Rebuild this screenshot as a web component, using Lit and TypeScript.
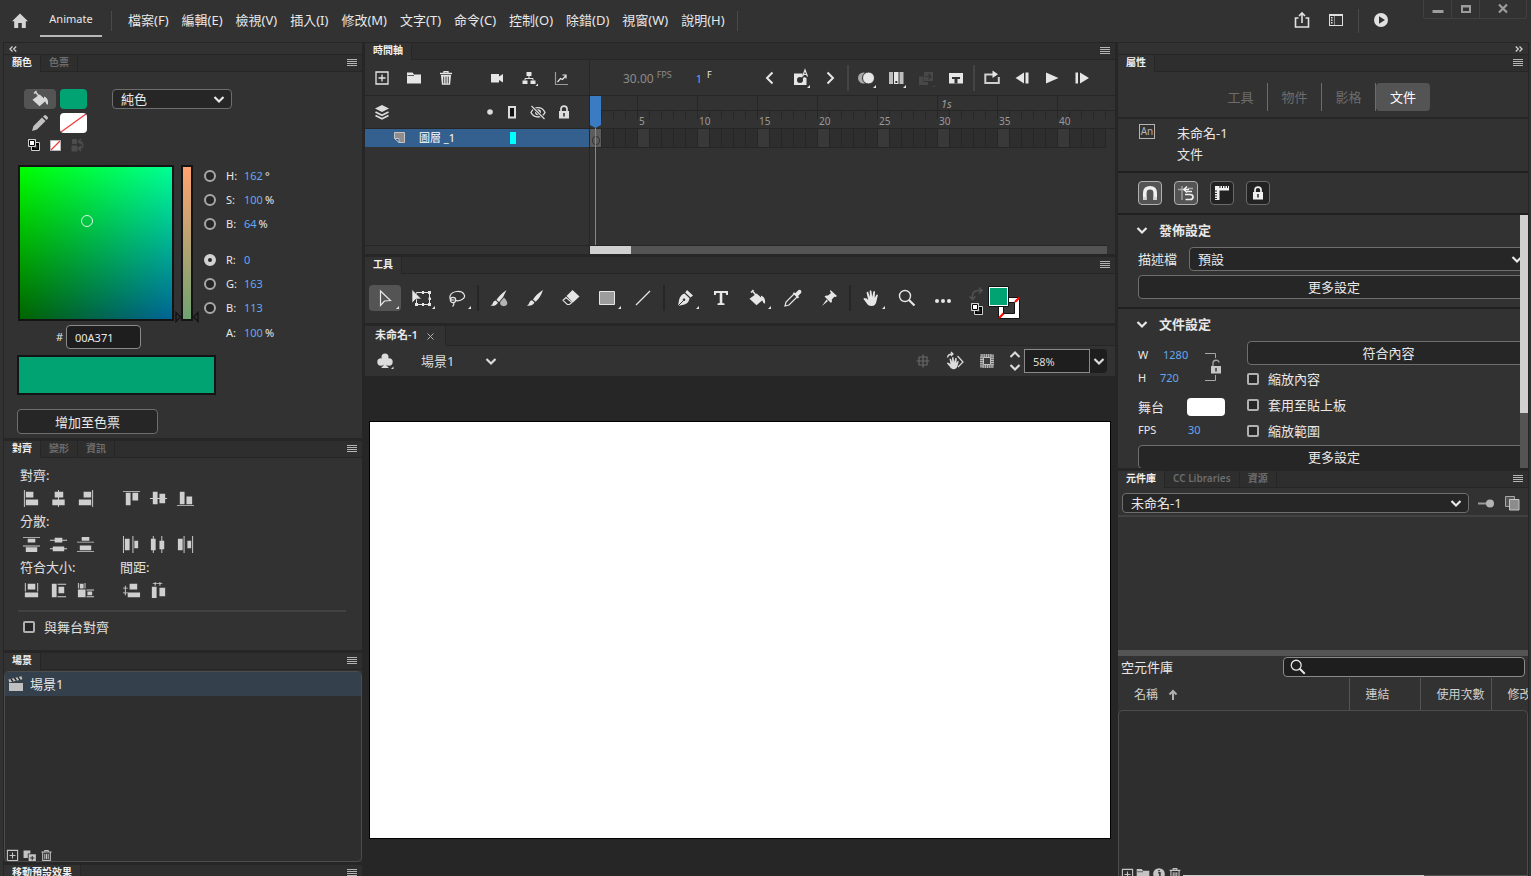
import { LitElement, html, svg, css, nothing, SVGTemplateResult } from "lit";
import { customElement, state } from "lit/decorators.js";
import { classMap } from "lit/directives/class-map.js";

const corner = svg`<path d="M20 17v3h-3z" fill="#e6e6e6"/>`;

const GLYPHS: Record<string, SVGTemplateResult> = {
  home: svg`<path d="M10 2.500 2 10.200h2.200V17h4v-5h3.600v5h4v-6.800H18z"/>`,
  share: svg`<path d="M6.500 8H3.500v9h13V8h-3M10 13V3.500M7 6l3-3 3 3" fill="none" stroke="currentColor" stroke-width="1.600"/>`,
  workspace: svg`<rect x="3.500" y="4.500" width="13" height="11" fill="none" stroke="currentColor"/><path d="M3 4h14v2H3z"/><path d="M5 7h1.500v1.500H5zM5 9.500h1.500V11H5zM5 12h1.500v1.500H5z"/><path d="M8.500 5v10" stroke="currentColor" stroke-width=".5"/>`,
  playCircle: svg`<circle cx="10" cy="10" r="7"/><path d="M8 6.200v7.600l6-3.800z" fill="#323232"/>`,
  minimize: svg`<path d="M4.500 11h11v3h-11z"/>`,
  maximize: svg`<path d="M5 6h10v8H5zM7 8.500v3.500h6V8.500z" fill-rule="evenodd"/>`,
  close: svg`<path d="m6 5.500 8 8m0-8-8 8" stroke="currentColor" stroke-width="2.200"/>`,
  chevron: svg`<path d="m5.500 8 4.500 4.500L14.500 8" fill="none" stroke="currentColor" stroke-width="2.200"/>`,
  chevronUp: svg`<path d="m5.500 12 4.500-4.500 4.500 4.500" fill="none" stroke="currentColor" stroke-width="2"/>`,
  prev: svg`<path d="m12.500 4.500-5.500 5.500 5.500 5.500" fill="none" stroke="currentColor" stroke-width="2"/>`,
  next: svg`<path d="m7.500 4.500 5.500 5.500-5.500 5.500" fill="none" stroke="currentColor" stroke-width="2"/>`,
  bucket: svg`<path d="m2.500 10.800 7.200-5.300 6.500 6-6.700 5.800z"/><path d="m5.500 3 4.500 5.500M4 4.500 6.500 2" stroke="currentColor" stroke-width="1.500"/><path d="M14 7.500c3.500 1.300 4.500 4 4 8-2 .6-2.500-3.500-4-5.500z"/>`,
  pencil: svg`<path d="m2 18 1.500-5L12 4.500l3.500 3.500L7 16.500zM13 3.500l1.200-1.100q1-.8 2 0l1.500 1.500q.8 1 0 1.900L16.500 7z"/>`,
  defaultColors: svg`<path d="M7.500 7.500h8v8h-8z" fill="#000" stroke="#d0d0d0"/><path d="M10 10h3.500v3.500H10z" fill="#323232"/><path d="M4.500 4.500h7v7h-7z" fill="#fff" stroke="#d0d0d0"/><path d="M5.500 5.500h5v5h-5z" fill="#fff" stroke="#000"/>`,
  noneColor: svg`<path d="M4.500 5.500h10v10h-10z" fill="#fff" stroke="#b8b8b8"/><path d="m5 15 9-9" stroke="#f03c3c" stroke-width="1.200"/>`,
  swapGray: svg`<path d="M4.500 4.500h4v4h-4zM4 11h5v5H4z" fill="#4c4c4c" stroke="#4c4c4c"/><path d="M11 6.500c5-1 5 8 0 7M13 4l-2.500 2.500L13 9M13 11l-2.500 2.500L13 16" fill="none" stroke="#4c4c4c" stroke-width="1.500"/>`,
  plusBox: svg`<path d="M4 4h12v12H4zM10 6.500v7M6.500 10h7" fill="none" stroke="currentColor" stroke-width="1.300"/>`,
  folder: svg`<path d="M3 4.500h5.500l1.500 2h7V15.500H3z"/><path d="M3.500 7.500H10" stroke="#323232" stroke-width=".8"/>`,
  trash: svg`<path d="M4 5.500h12M8 5V3.700h4V5" fill="none" stroke="currentColor" stroke-width="1.300"/><path d="M5 7h10l-.9 9.800H5.900z"/><path d="M7.700 8.500v7M10 8.500v7M12.300 8.500v7" stroke="#323232" stroke-width=".9"/>`,
  trashLine: svg`<path d="M4 6h12M8 5.500V4h4v1.500M5.500 6.500v9.500h9V6.500M8 8v6.500M10 8v6.500M12 8v6.500" fill="none" stroke="currentColor" stroke-width="1.200"/>`,
  camera: svg`<path d="M4 6h8v2.500L16 6v8.500L12 12v2.500H4z"/>`,
  hierarchy: svg`<path d="M7.500 4h5v4h-5zM3.500 12.500h5v3.500h-5zM11.500 12.500h5v3.500h-5z"/><path d="M10 8v2.500M6 12.500v-2h8v2" fill="none" stroke="currentColor"/><path d="M19 15.500v2.500h-2.500z" fill="#e6e6e6"/>`,
  graph: svg`<path d="M4.500 4v12.500H17" fill="none" stroke="#9a9a9a" stroke-width="1.200"/><path d="m6.500 14 3-3.500 2 1L15 7.500M11.500 7H15v3.500" fill="none" stroke="currentColor" stroke-width="1.200"/>`,
  onionA: svg`<path d="M4 5.500h8.500v3l4 1.500v7H4z"/><circle cx="10" cy="12" r="3" fill="#323232"/><path d="m11.800 10.500 2.500-3" stroke="#323232" stroke-width="1.500"/><path d="m12.500 8.500 2.500-6.500 2.500 6.500M13.500 6.500h3" fill="none" stroke="currentColor" stroke-width="1.200"/>${corner}`,
  onion: svg`<circle cx="7.500" cy="10" r="5.500" fill="#a8a8a8"/><circle cx="12.500" cy="10" r="6" stroke="#323232"/>${corner}`,
  multiFrame: svg`<path d="M3 4h4v12H3zM13.500 4h4v12h-4z" fill="#bdbdbd"/><path d="M8 4h4.500v12H8z"/><path d="M9.300 13h2v2h-2z" fill="#323232"/>${corner}`,
  pasteDim: svg`<path d="M8 4h9v9H8zM3 8.500h4.500V14H12v3H3z" fill="#484848"/><path d="M9.500 8.500h5M12.500 6l2.500 2.500-2.500 2.500" fill="none" stroke="#323232" stroke-width="1.200"/><path d="M19 17v2h-2z" fill="#484848"/>`,
  splitFrame: svg`<path d="M3 5h14v10.500H3z"/><path d="M6 9h8v2h-2.500v4.500h-3V11H6z" fill="#323232"/><path d="M9.500 11h1v3h-1z" fill="#323232"/>`,
  loop: svg`<path d="M6 6.500H3.300V15h13.500V9" fill="none" stroke="#cfcfcf" stroke-width="2"/><path d="M6 6.500h6" stroke="#cfcfcf" stroke-width="2"/><path d="M10.500 2.500 16 6.300l-5.500 3.700z"/>`,
  stepBack: svg`<path d="M12 4.500v11L3.500 10zM13.500 4.500h3v11h-3z"/>`,
  play: svg`<path d="M4 4.500 16.500 10 4 15.500z"/>`,
  stepFwd: svg`<path d="M8 4.500v11l9-5.500zM3.500 4.500H6v11H3.500z"/>`,
  layers: svg`<path d="m10 3 7 3.500-7 3.500-7-3.500z"/><path d="m3.500 10 6.500 3.200 6.500-3.200M3.500 13.500l6.500 3.200 6.500-3.200" fill="none" stroke="currentColor" stroke-width="1.800"/>`,
  dot: svg`<circle cx="14" cy="10" r="2.800"/>`,
  outline: svg`<path d="M7 5h6v10.500H7z" fill="#111" stroke="currentColor" stroke-width="2"/>`,
  eyeOff: svg`<path d="M3 10.500c3-6.500 11-6.500 14 0-3 6-11 6-14 0z" fill="none" stroke="currentColor" stroke-width="1.400"/><circle cx="10" cy="10.200" r="3"/><path d="M3.500 4 16.500 17" stroke="#323232" stroke-width="3"/><path d="m3.500 4 13 13" stroke="currentColor" stroke-width="1.300"/>`,
  lock: svg`<path d="M5 9h10v7.500H5z"/><path d="M7 9V6.800c0-3.700 6-3.700 6 0V9" fill="none" stroke="currentColor" stroke-width="1.700"/><path d="M9.200 11h1.600v3.500H9.200z" fill="#323232"/>`,
  unlock: svg`<path d="M5 10h10v7.500H5z" fill="#c8c8c8"/><path d="M7 10V7c0-3.600 6-3.600 6-.5" fill="none" stroke="#a8a8a8" stroke-width="1.300"/><path d="M9.300 12h1.400v3.500H9.300z" fill="#323232"/>`,
  layerPage: svg`<path d="M5.500 4.500h10v10H10L5.500 10z" fill="#8e8e8e" stroke="#c4c4c4"/><path d="M5.500 10.500H10v4z" fill="#34608f" stroke="#c4c4c4"/>`,
  arrow: svg`<path d="M5.500 3v14.500l4-4.500 6-.5z" fill="none" stroke="currentColor" stroke-width="1.200"/>`,
  transform: svg`<path d="M5.500 4.500h13v12h-13z" fill="none" stroke="currentColor"/><path d="M11 3h2v3h-2zM11 15h2v3h-2zM17 3h3v3h-3zM17 15h3v3h-3zM4 15h3v3H4zM17.500 9.500h2.500v2.500h-2.500z"/><path d="M1 1.500V15l4-4h5.500z" stroke="#323232" stroke-width=".6"/>`,
  lasso: svg`<path d="M5 12.500C1 10 3 4 10 3.500s10 5 5 8c-2.500 1.500-5 1.500-7 .8" fill="none" stroke="currentColor" stroke-width="1.200"/><circle cx="6" cy="12" r="2.700" fill="none" stroke="currentColor" stroke-width="1.200"/><path d="M5 12h2.500M6 14.500q2 1.500-.5 4" fill="none" stroke="currentColor" stroke-width="1.200"/>`,
  fluidBrush: svg`<path d="M17.500 2q-7 5-10 10l2.500 2q5-5 7.500-12zM6.700 12.500 9 14.700q-2.500 4-7.500 2.800 2.500-1 2.300-2.500.7-2.300 2.900-2.500z"/><path d="M15 9.500q5.500 6 2 8c-4 2-7-1-5.500-4z" fill="#b4b4b4"/>`,
  brush: svg`<path d="M18 2Q11 6.500 8 11.500l2.700 2.300Q15.500 9.500 18 2zM7 12.300l2.500 2.200q-2.500 4-7.500 3 2.200-1 2.200-2.700.8-2.300 2.800-2.500z"/>`,
  eraser: svg`<path d="m11.500 2 7 6.500-6.500 6L5.500 8z"/><path d="M5 9.500 2 12.300l4.300 4.200h2.200l2.500-2z" fill="none" stroke="currentColor" stroke-width="1.100"/>`,
  rect: svg`<path d="M2.500 3.500h15v13h-15z" fill="#9c9c9c" stroke="currentColor"/>`,
  line: svg`<path d="m3 17 14-14" stroke="currentColor" stroke-width="1.300"/>`,
  pen: svg`<path d="m12 2 6 5.500-2.500 2L10.300 4.500zM9.500 5.500l5 4.800q-.5 4.700-5 6.200l-6.500 1.500 1.200-6.800q1.500-4.500 5.300-5.700z"/><path d="m3 18 5.500-5.500" stroke="#323232"/><circle cx="9" cy="11.800" r="1.300" fill="#323232"/>`,
  text: svg`<path d="M3 3h14v4h-1.800l-.5-2h-3.400v10l2.200.6V17h-7v-1.400l2.200-.6V5H5.300l-.5 2H3z"/>`,
  dropper: svg`<path d="M11.500 5.500 3 14l-1 4 4-1 8.500-8.500" fill="none" stroke="currentColor" stroke-width="1.200"/><path d="M9.800 5.300 11 4.200l1.200 1L14.500 3q2-2 3.500-.6 1.300 1.600-.6 3.400l-2.300 2.300 1 1.200-1.200 1.200z"/>`,
  pin: svg`<path d="m11.500 2 6.500 6-1.500 1-1.200-.3-2.500 2.800q.7 2-.8 3.500L5.500 8.500q1.300-1.500 3.500-1L12 5l-1-1.500zM7.500 11.500l1.500 1.500-6 5z"/>`,
  hand: svg`<path d="M4.500 10.500 5 10 7.300 12 5.600 5q0-1.500 1.500-1.300L8.900 9 8.700 3q.3-1.600 1.700 0L11.200 9l1.200-5.500q1.200-1.200 1.600.3L13.700 10l1.700-3.200q1.600-.8 1.400.8L15.500 13q-.6 5-5 5-3.500 0-5-3L2.500 11q.2-1.500 2-.5z"/>`,
  zoom: svg`<circle cx="8" cy="8" r="5.500" fill="none" stroke="currentColor" stroke-width="1.400"/><path d="m12 12 5.500 5.500" stroke="currentColor" stroke-width="2.200"/>`,
  more: svg`<circle cx="4" cy="13" r="2"/><circle cx="10" cy="13" r="2"/><circle cx="16" cy="13" r="2"/>`,
  swapArc: svg`<path d="M5.500 15V12q0-5 5.500-5.500h3.500M12 3.500l3 3-3 3M2.500 12.500l3 3 3-3" fill="none" stroke="#505050" stroke-width="1.700"/>`,
  club: svg`<circle cx="10" cy="6" r="3.500"/><circle cx="6" cy="11" r="3.700"/><circle cx="14" cy="11" r="3.700"/><path d="M9 9h2l.5 5.500 2.500 2.500H6l2.500-2.500z"/><path d="M18.500 15.500v2.500H16z"/>`,
  center: svg`<path d="M10 3.500v13M3.500 10h13M6 6h8v8H6z" fill="none" stroke="#686868" stroke-width="1.200"/>`,
  handRotate: svg`<path d="M3 11.500 5.500 13 4.500 8q.8-1 1.500 0L7.200 11 7 6.500q1-1 1.500 0L9.200 11l1.200-4q1-.7 1.300.4L11.500 12l1.200-2q1-.2 1 .8L12.500 15q-1 3.500-4.500 3.300-2.500-.3-3.500-3L2 12.500q0-1 1-1z"/><path d="m12.500 5 5.500 6-5 5" fill="none" stroke="currentColor" stroke-width="1.200"/><path d="M2.500 6.500Q3 3 7.500 3M6 1l2 2-2 2" fill="none" stroke="currentColor" stroke-width="1.300"/>`,
  clip: svg`<path d="M3 3h14v14H3z" fill="#6c6c6c"/><path d="M4.500 4.500h11v11h-11z" fill="none" stroke="#bcbcbc" stroke-width="3" stroke-dasharray="1 1.200"/><path d="M6.500 6.500h7v7h-7z" fill="#3a3a3a" stroke="#c0c0c0"/>`,
  magnet: svg`<path d="M4.800 17V10q0-5.200 5.200-5.200t5.200 5.200v7" fill="none" stroke="currentColor" stroke-width="3.600"/><path d="M3 14h3.600v3H3zM13.400 14H17v3h-3.600z" fill="#d4d4d4"/>`,
  snap: svg`<path d="M2 6.500h8M6 3v14M17 5.500h-5" fill="none" stroke="#a8a8a8" stroke-width="1.300"/><path d="m11 3.500-3 3 3 3M8 6.500h5M16 8.500h-5M9 11.500h5q3 0 3 2.500t-3 2.500H9.500" fill="none" stroke="currentColor" stroke-width="1.700"/>`,
  rulers: svg`<path d="M3 3h14v4.500H7.500V17H3z"/><path d="M8 3v2M10.500 3v2M13 3v2M15.500 3v2M3 8h2M3 10.500h2M3 13h2M3 15.500h2" stroke="#262626"/>`,
  libPin: svg`<path d="M2 9.500h10v2H2z" opacity=".8"/><circle cx="14" cy="10.500" r="4"/>`,
  newLib: svg`<path d="M3.500 3.500h9v10h-9z" fill="#555" stroke="#a8a8a8"/><path d="M7.500 6.500h9.500v10.500H7.500z" fill="#8c8c8c" stroke="#c4c4c4"/>`,
  clapper: svg`<path d="M3 9h14v8H3z"/><path d="m2.500 5.500 13-3.300.8 3L3.300 8.500z"/><path d="m5 5 2 2.700M8.500 4l2 2.700M12 3.200l2 2.700" stroke="#222" stroke-width="1.400"/>`,
  duplicate: svg`<path d="M3 4h8v3.500H8V13H3zM9 8.500h8.500V17H9z" /><path d="M13.200 10.500v5M10.700 13h5" stroke="#2e2e2e" stroke-width="1.200"/>`,
  info: svg`<circle cx="10" cy="10" r="6.500"/><path d="M9.200 8.500h1.800V14M10 5.500v1.500" stroke="#2e2e2e" stroke-width="1.700" fill="none"/>`,
  sortUp: svg`<path d="M10 15V7M6.500 9.500 10 6l3.500 3.500" fill="none" stroke="currentColor" stroke-width="2"/>`,
  alLeft: svg`<path d="M2 1h1v18H2zM4 3h8v6H4zM4 11h13v6H4z"/>`,
  alCenter: svg`<path d="M9.500 1h1v18h-1zM6 3h9v6H6zM3.500 11h13v6h-13z"/>`,
  alRight: svg`<path d="M17 1h1v18h-1zM8 3h8v6H8zM3 11h13v6H3z"/>`,
  alTop: svg`<path d="M1 2h18v1H1zM4 4h5v13H4zM11 4h6v8h-6z"/>`,
  alMiddle: svg`<path d="M1 9.500h18v1H1zM4 3h5v13H4zM11 5h6v10h-6z"/>`,
  alBottom: svg`<path d="M1 17h18v1H1zM4 3h5v13H4zM11 8h6v8h-6z"/>`,
  dsTop: svg`<path d="M1 2h18v1H1zM6 4h8v4H6zM1 11h18v1H1zM4 13h12v5H4z"/>`,
  dsMiddle: svg`<path d="M1 5h18v1H1zM6 3h8v5H6zM1 14h18v1H1zM4 12h12v5H4z"/>`,
  dsBottom: svg`<path d="M1 7h18v1H1zM6 2h8v4H6zM1 17h18v1H1zM4 11h12v5H4z"/>`,
  dsLeft: svg`<path d="M1 1h1v18H1zM3 4h5v12H3zM11 1h1v18h-1zM13 6h4v8h-4z"/>`,
  dsCenter: svg`<path d="M4 1h1v18H4zM2 4h5v12H2zM13 1h1v18h-1zM11 6h5v9h-5z"/>`,
  dsRight: svg`<path d="M8 1h1v18H8zM2 4h5v12H2zM17 1h1v18h-1zM12 6h4v8h-4z"/>`,
  szWidth: svg`<path d="M3 2h1v9H3zM6 3h8v6H6zM16 2h1v9h-1zM3 12h14v5H3z"/>`,
  szHeight: svg`<path d="M3 3h5v14H3zM9 3h9v1H9zM10 6h6v7h-6zM9 16h9v1H9z"/>`,
  szBoth: svg`<path d="M2 2h1v6H2zM4 3h4v5H4zM9 2h1v6H9zM2 9h8v8H2zM11 9h8v1h-8zM12 11h5v4h-5zM11 16h8v1h-8z"/>`,
  spV: svg`<path d="M1 7h5v1H1zM1 12h5v1H1zM3 5h1v10H3zM8 3h8v6H8zM6 12h13v5H6z"/>`,
  spH: svg`<path d="M6 1h1v4H6zM11 1h1v4h-1zM4 2h10v1H4zM3 6h5v12H3zM11 7h6v9h-6z"/>`,
};

const icon = (name: string, size = 20) =>
  html`<svg class="ic" viewBox="0 0 20 20" width=${size} height=${size} fill="currentColor" aria-hidden="true">${GLYPHS[name]}</svg>`;

const burger = html`<button class="burger" aria-label="面板選單"><svg width="10" height="7" viewBox="0 0 10 7" fill="#b4b4b4"><path d="M0 0h10v1H0zM0 2h10v1H0zM0 4h10v1H0zM0 6h10v1H0z"/></svg></button>`;

const tabs = (names: string[], menu = true) => html`
  <div class="tabs">
    ${names.map((n, i) => html`<button class=${classMap({ tab: true, on: i === 0 })}>${n}</button>`)}
    ${menu ? burger : nothing}
  </div>`;

const tool = (name: string, label: string, more = false, on = false) => html`
  <button class=${classMap({ tool: true, on })} aria-label=${label}>
    ${icon(name)}
    ${more ? html`<svg class="more" width="3" height="3" viewBox="0 0 3 3"><path d="M3 0v3H0z" fill="#e6e6e6"/></svg>` : nothing}
  </button>`;

const MENUS = ["檔案(F)", "編輯(E)", "檢視(V)", "插入(I)", "修改(M)", "文字(T)", "命令(C)", "控制(O)", "除錯(D)", "視窗(W)", "說明(H)"];

const CHANNELS = [
  { key: "H:", value: "162", unit: "°" },
  { key: "S:", value: "100", unit: "%" },
  { key: "B:", value: "64", unit: "%" },
  { key: "R:", value: "0", unit: "" },
  { key: "G:", value: "163", unit: "" },
  { key: "B:", value: "113", unit: "" },
];

const FRAMES = Array.from({ length: 43 }, (_, i) => i + 1);

@customElement("app-root")
export class AppRoot extends LitElement {
  @state() private channel = 3;

  static styles = css`
    :host {
      display: flex;
      flex-direction: column;
      height: 100vh;
      overflow: hidden;
      background: #323232;
      color: #e8e8e8;
      font: 13px/20px "Noto Sans", "Noto Sans CJK TC", sans-serif;
    }
    * { box-sizing: border-box; }
    button, input, select { font: inherit; color: inherit; margin: 0; }
    button {
      display: flex;
      align-items: center;
      justify-content: center;
      flex: none;
      padding: 0;
      border: 0;
      background: none;
    }
    .ic { display: block; flex: none; }
    .small { font-size: 11px; }
    .blue { color: #64a8f0; }

    .topbar { display: flex; align-items: center; height: 42px; flex: none; padding-left: 4px; }
    .home { width: 32px; height: 40px; color: #d4d4d4; }
    .app-tab {
      width: 62px;
      height: 34px;
      margin: 0 9px 0 4px;
      border-bottom: 2px solid #b8b8b8;
      font-size: 11px;
      align-self: flex-start;
      margin-top: 3px;
    }
    .vr { width: 1px; height: 20px; background: #4a4a4a; flex: none; }
    .menus { display: flex; gap: 13px; margin: 0 12px 0 16px; padding-bottom: 3px; }
    .top-right { display: flex; align-items: center; align-self: stretch; margin-left: auto; padding-right: 4px; }
    .top-right button { width: 34px; height: 38px; color: #e0e0e0; padding-bottom: 2px; }
    .top-right .vr { height: 24px; margin: 0 5px; background: #4a4a4a; }
    .win {
      display: flex;
      align-self: flex-start;
      height: 19px;
      margin-left: 25px;
      border: 1px solid #404040;
      border-top: 0;
      border-radius: 0 0 3px 3px;
    }
    .top-right .win button { width: 28px; height: 18px; padding: 0; color: #9c9c9c; border-right: 1px solid #404040; }
    .top-right .win button:last-child { width: 46px; border: 0; }

    .work {
      display: grid;
      grid-template-columns: 359px minmax(0, 1fr) 411px;
      column-gap: 3px;
      flex: 1;
      min-height: 0;
      margin: 0 2px 0 3px;
      background: #262626;
    }
    .col { display: flex; flex-direction: column; min-width: 0; min-height: 0; padding-top: 1px; gap: 3px; }
    .col.left { padding-left: 1px; }
    .col.right { padding-right: 1px; }
    .panel { background: #323232; flex: none; min-width: 0; }
    .collapse { display: flex; height: 12px; padding: 0 5px; border-bottom: 1px solid #262626; }
    .collapse.end { justify-content: flex-end; }
    .tabs { display: flex; height: 17px; background: #2e2e2e; border-bottom: 1px solid #262626; }
    .tab {
      height: 17px;
      padding: 0 8px 3px;
      border-right: 1px solid #262626;
      font-size: 10px;
      font-weight: 600;
      line-height: 14px;
      color: #6c6c6c;
      white-space: nowrap;
    }
    .tab.on { background: #323232; color: #f0f0f0; }
    .burger { width: 20px; height: 15px; margin-left: auto; }

    .select { display: flex; position: relative; }
    .select select {
      appearance: none;
      width: 100%;
      height: 20px;
      padding: 0 24px 0 8px;
      border: 1px solid #6e6e6e;
      border-radius: 4px;
      background: #262626;
      outline: 0;
      line-height: 18px;
    }
    .select .ic { position: absolute; right: 3px; top: 0; height: 100%; pointer-events: none; }
    .btn { border: 1px solid #6e6e6e; border-radius: 4px; background: #262626; height: 25px; }

    .color { padding: 17px 13px 4px; }
    .fills { display: grid; grid-template-columns: 32px 27px 120px; column-gap: 4px; row-gap: 4px; padding-left: 7px; }
    .fills .select { margin-left: 21px; width: 120px; }
    .chip { height: 20px; border-radius: 4px; background: #00a371; overflow: hidden; }
    .chip.none { background: #fff; }
    .tile { height: 20px; border-radius: 4px; color: #c0c0c0; }
    .tile.on { background: #545454; color: #d8d8d8; }
    .mini { display: flex; gap: 2px; height: 20px; margin: 2px 0 9px 7px; }
    .mini button { width: 20px; }
    .picker { display: flex; height: 186px; }
    .picker-left { width: 187px; flex: none; padding-top: 1px; }
    .fields { display: flex; gap: 7px; padding-left: 1px; }
    .field {
      position: relative;
      width: 156px;
      height: 156px;
      border: 2px solid #141414;
      background: linear-gradient(to right, #000, #000096), linear-gradient(to bottom, #0f0, #006400);
      background-blend-mode: screen, normal;
    }
    .knob { position: absolute; left: 61px; top: 48px; width: 12px; height: 12px; border: 1px solid #dff5e6; border-radius: 50%; }
    .ramp { position: relative; width: 12px; height: 156px; border: 2px solid #141414; background: linear-gradient(#ffa371, #6fa371); }
    .ramp svg { position: absolute; left: -8px; bottom: -4px; }
    .hex { display: flex; align-items: center; gap: 4px; margin: 4px 0 0 39px; font-size: 11px; }
    .hex label { width: 6px; }
    .hex input { width: 75px; height: 24px; padding: 0 8px; border: 1px solid #8a8a8a; border-radius: 4px; background: #1e1e1e; outline: 0; }
    .channels { display: flex; flex-direction: column; font-size: 11px; }
    .ch { display: flex; align-items: center; height: 24px; }
    .ch:nth-child(4) { margin-top: 12px; }
    .ch:last-child { margin-top: 1px; }
    .ch .k { width: 18px; margin-left: 10px; }
    .ch .v { margin-right: 2px; }
    input[type="radio"] {
      appearance: none;
      width: 12px;
      height: 12px;
      border: 2px solid #a8a8a8;
      border-radius: 50%;
      background: #262626;
      flex: none;
    }
    input[type="radio"]:checked { border: 4px solid #d2d2d2; }
    .ch .pad { width: 12px; }
    input[type="checkbox"] {
      appearance: none;
      width: 12px;
      height: 12px;
      border: 2px solid #b0b0b0;
      border-radius: 2px;
      background: #262626;
      flex: none;
    }
    .preview { width: 199px; height: 40px; margin: 5px 0 14px; border: 2px solid #141414; background: #00a371; }
    .color .btn { width: 141px; }

    .align { padding: 7px 16px 13px 14px; color: #e0e0e0; }
    .agrid { display: grid; grid-template-columns: 100px 100px; }
    .agrid .lbl { height: 20px; padding-left: 2px; }
    .arow { display: flex; height: 26px; }
    .arow button { width: 27px; color: #cfcfcf; }
    .hr { height: 2px; margin: 7px 0 5px; background: #424242; }
    .check { display: flex; align-items: center; gap: 9px; }
    .align .check { padding-left: 5px; }

    .scenes { display: flex; flex-direction: column; flex: 1; min-height: 0; }
    .list { display: flex; flex-direction: column; flex: 1; margin-top: 1px; border: 1px solid #4c4c4c; border-radius: 5px; background: #2e2e2e; overflow: hidden; }
    .scene { display: flex; align-items: center; gap: 4px; height: 24px; padding-left: 1px; background: #34404c; }
    .scene .ic { color: #c0c0c0; }
    .foot { display: flex; gap: 2px; height: 12px; margin-top: auto; color: #c4c4c4; }
    .foot button { width: 15px; }
    .presets { height: 11px; overflow: hidden; }

    .tl { display: grid; grid-template-columns: 224px minmax(0, 1fr); height: 194px; }
    .tl-left { border-right: 1px solid #262626; display: flex; flex-direction: column; width: 225px; }
    .tl-bar { display: flex; align-items: center; height: 36px; border-bottom: 1px solid #262626; padding-left: 1px; flex: none; }
    .tl-bar button { width: 32px; height: 32px; color: #e6e6e6; }
    .tl-bar .gap { margin-left: 19px; }
    .tl-head { display: flex; align-items: center; height: 33px; border-bottom: 1px solid #262626; padding: 0 12px 0 1px; flex: none; color: #dcdcdc; }
    .tl-head button { width: 26px; height: 26px; }
    .tl-head button:first-child { width: 32px; margin-right: auto; }
    .layer { display: flex; align-items: center; height: 18px; padding-left: 24px; background: #34608f; color: #fff; font-size: 11px; flex: none; }
    .layer .name { margin-left: 10px; width: 91px; }
    .layer .mark { width: 6px; height: 12px; background: #00ffff; }
    .tl-end { margin-top: auto; height: 9px; border-top: 1px solid #262626; }
    .tl-right { position: relative; display: flex; flex-direction: column; margin-left: 1px; min-width: 0; overflow: hidden; }
    .tl-right .tl-bar { padding: 0 18px 0 33px; }
    .tl-right .tl-bar button { width: 30px; }
    .fps { color: #8c8c8c; font-size: 12px; padding-top: 2px; }
    .one { padding-top: 2px; }
    .sup { margin: 0 24px 5px 3px; font-size: 9px; color: #8c8c8c; }
    .sup.w { color: #e8e8e8; margin-left: 5px; }
    .tl-bar .groups { display: flex; align-items: center; margin-left: auto; }
    .bar { width: 2px; height: 26px; margin: 0 2px; background: #444; flex: none; }
    .secs { height: 15px; display: flex; border-bottom: 1px solid #262626; flex: none; }
    .secs span { flex: none; width: 60px; border-left: 1px solid #262626; padding-left: 3px; font: italic 11px/15px "Noto Sans", sans-serif; color: #9a9a9a; }
    .secs span:first-child { width: 47px; border: 0; }
    .nums { display: flex; height: 18px; border-bottom: 1px solid #262626; flex: none; }
    .nums span { flex: none; width: 12px; height: 8px; padding-left: 1px; border-right: 1px solid #262626; font-size: 10px; line-height: 20px; color: #9a9a9a; white-space: nowrap; }
    .frames { display: flex; height: 19px; flex: none; }
    .frames span { width: 12px; flex: none; background: #2e2e2e; border: solid #262626; border-width: 0 1px 1px 0; }
    .frames span.fifth { background: #393939; }
    .frames span.first { display: flex; align-items: center; justify-content: center; background: #5c5c5c; }
    .frames span.first::after { content: ""; width: 6px; height: 7px; margin-top: 4px; border: 1px solid #333; border-radius: 50%; }
    .playhead { position: absolute; left: 0; top: 36px; height: 149px; width: 11px; }
    .playhead svg { display: block; }
    .playhead::after { content: ""; display: block; width: 1px; height: 117px; margin-left: 5px; background: #5b93d0; }
    .scroll { margin: auto 8px 0 0; border-top: 1px solid #262626; }
    .scroll div { height: 8px; background: #545454; }
    .scroll i { display: block; width: 41px; height: 8px; background: #d0d0d0; }

    .tools { display: flex; align-items: center; height: 49px; padding: 0 0 2px 4px; }
    .tool { position: relative; width: 32px; height: 26px; margin-right: 4px; border-radius: 4px; color: #e6e6e6; }
    .tool.on { background: #545454; }
    .more { position: absolute; right: 2px; bottom: 2px; }
    .tools .bar { background: #262626; margin: 0 4px 0 0; }
    .swatches { display: flex; margin: 8px 0 0 4px; }
    .swap { display: flex; flex-direction: column; justify-content: center; }
    .swap button { width: 20px; height: 15px; }

    .doc { display: flex; flex-direction: column; flex: 1; min-height: 0; }
    .doc-tabs { display: flex; height: 20px; background: #2e2e2e; border-bottom: 1px solid #262626; }
    .doc-tab { display: flex; height: 20px; align-items: center; gap: 9px; padding: 0 11px 2px 10px; border-right: 1px solid #262626; background: #323232; font-size: 11px; font-weight: 600; }
    .doc-tab button { padding-top: 2px; }
    .edit { display: flex; align-items: center; height: 30px; padding: 0 8px 0 10px; color: #dcdcdc; }
    .edit .select { width: 91px; margin-left: 18px; }
    .edit .select select { border: 0; background: none; padding: 0 24px 0 8px; }
    .edit .view { display: flex; align-items: center; margin-left: auto; }
    .edit .view > button { width: 32px; height: 24px; }
    .step { display: flex; flex-direction: column; width: 18px; margin-left: 3px; }
    .step button { height: 12px; }
    .zoomv { width: 66px; height: 24px; padding: 0 8px; border: 1px solid #8a8a8a; background: #1e1e1e; font-size: 11px; outline: 0; }
    .edit .view .drop { width: 17px; background: #1e1e1e; border-radius: 0 4px 4px 0; }
    .stage-area { flex: 1; padding: 45px 4px 0; background: #262626; }
    .stage { aspect-ratio: 742 / 418; background: #fff; border: 1px solid #000; }

    .modes { display: flex; justify-content: flex-end; align-items: center; height: 47px; padding: 4px 98px 0 0; border-bottom: 2px solid #262626; color: #6c6c6c; }
    .modes button { width: 54px; height: 28px; border-right: 1px solid #6c6c6c; }
    .modes button.on { border: 0; border-radius: 4px; background: #545454; color: #fff; }
    .about { display: flex; height: 54px; padding: 4px 0 0 21px; gap: 22px; border-bottom: 2px solid #1f1f1f; }
    .an { width: 16px; height: 15px; margin-top: 1px; border: 1px solid #b4b4b4; font-size: 10px; line-height: 13px; text-align: center; color: #b4b4b4; }
    .about p { margin: 0; line-height: 21px; }
    .snaps { display: flex; align-items: center; gap: 12px; height: 42px; padding-left: 20px; border-bottom: 2px solid #1f1f1f; }
    .snaps button { width: 24px; height: 24px; border: 1px solid #6a6a6a; border-radius: 4px; background: #222; color: #f0f0f0; }
    .snaps button.on { background: #545454; border-color: #b0b0b0; }
    .props { display: flex; height: 253px; }
    .props-view { flex: 1; min-width: 0; overflow: hidden; }
    .props-in { min-width: 412px; }
    .track { width: 8px; background: #545454; flex: none; }
    .track i { display: block; height: 198px; background: #d0d0d0; }
    .sec { padding: 5px 0 8px 20px; border-bottom: 2px solid #1f1f1f; }
    .sec:last-child { border: 0; }
    .sec h3 { display: flex; align-items: center; gap: 7px; margin: 0 0 7px; font-size: 13px; font-weight: 700; line-height: 20px; }
    .sec h3 .ic { margin-left: -6px; }
    .prof { display: grid; grid-template-columns: 51px 1fr; align-items: center; margin-bottom: 4px; }
    .prof select { height: 24px; }
    .sec .btn { width: 100%; height: 24px; }
    .dim { display: grid; grid-template-columns: 109px 1fr; margin-bottom: 1px; }
    .size { display: grid; grid-template-columns: 1fr 42px; height: 54px; padding-top: 2px; }
    .pair { display: flex; align-items: center; height: 23px; font-size: 11px; }
    .pair span:first-child { width: 25px; }
    .pair.b span:first-child { width: 22px; }
    .link { display: block; }
    .kv { display: grid; grid-template-columns: 49px 1fr; align-items: center; height: 23px; }
    .kv .chip { width: 38px; height: 18px; background: #fff; }
    .kv .num { padding-left: 1px; }
    .opts { display: flex; flex-direction: column; }
    .opts .check { height: 26px; }
    .opts .btn { margin-bottom: 1px; }

    .lib { display: flex; flex-direction: column; flex: 1; min-height: 0; }
    .lib-top { display: flex; align-items: center; height: 29px; padding: 3px 5px 0 4px; border-bottom: 2px solid #424242; flex: none; }
    .lib-top .select { flex: 1; margin-right: 2px; }
    .lib-top button { width: 22px; height: 22px; color: #b4b4b4; margin-left: 4px; }
    .lib-prev { height: 133px; flex: none; }
    .lib-split { height: 6px; background: #545454; flex: none; }
    .lib-find { display: flex; align-items: center; justify-content: space-between; height: 22px; padding: 0 3px; flex: none; }
    .search { position: relative; width: 242px; }
    .search input { display: block; width: 100%; height: 20px; padding: 0 8px 0 26px; border: 1px solid #8a8a8a; border-radius: 4px; background: #1e1e1e; outline: 0; }
    .search .ic { position: absolute; left: 6px; top: 1px; }
    table { width: 100%; table-layout: fixed; border-collapse: collapse; flex: none; font-size: 12px; color: #cfcfcf; }
    th { height: 32px; padding: 2px 0 0 16px; font-weight: 400; text-align: left; border-left: 1px solid #545454; white-space: nowrap; overflow: hidden; }
    th:first-child { width: 231px; border: 0; }
    th:nth-child(2), th:nth-child(3) { width: 71px; }
    .sort { display: flex; align-items: center; gap: 5px; }
    .sort .ic { color: #b0b0b0; }
    .lib-list { display: flex; flex: 1; align-items: flex-end; border: 1px solid #4c4c4c; border-bottom: 0; border-radius: 5px 5px 0 0; background: #2e2e2e; }
    .lib-foot { display: flex; align-items: flex-start; height: 10px; width: 100%; overflow: hidden; color: #c4c4c4; }
    .lib-foot button { width: 16px; height: 16px; }
    .lib-foot i { align-self: flex-end; width: 241px; height: 1px; background: #d0d0d0; }
    .lib-foot i:last-child { flex: 1; background: #545454; }
  `;

  private left() {
    const rows: [string, string[], string, string[]][] = [
      ["對齊:", ["alLeft", "alCenter", "alRight"], "", ["alTop", "alMiddle", "alBottom"]],
      ["分散:", ["dsTop", "dsMiddle", "dsBottom"], "", ["dsLeft", "dsCenter", "dsRight"]],
      ["符合大小:", ["szWidth", "szHeight", "szBoth"], "間距:", ["spV", "spH"]],
    ];
    const set = (names: string[]) =>
      html`<div class="arow">${names.map((n) => html`<button aria-label=${n}>${icon(n, 19)}</button>`)}</div>`;
    return html`
      <aside class="col left">
        <section class="panel">
          <div class="collapse"><svg width="8" height="11" viewBox="0 0 8 11" fill="none" stroke="#d0d0d0" stroke-width="1.300"><path d="M3.500 3.500 1 6l2.500 2.500M7.200 3.500 4.700 6l2.500 2.500"/></svg></div>
          ${tabs(["顏色", "色票"])}
          <div class="color">
            <div class="fills">
              <button class="tile on" aria-label="填色">${icon("bucket")}</button>
              <button class="chip" aria-label="填色顏色"></button>
              <div class="select"><select aria-label="顏色類型"><option>純色</option></select>${icon("chevron")}</div>
              <button class="tile" aria-label="筆觸">${icon("pencil")}</button>
              <button class="chip none" aria-label="筆觸顏色"><svg width="27" height="20"><path d="M1 19 26 1" stroke="#f03c3c" stroke-width="1.300"/></svg></button>
            </div>
            <div class="mini">
              <button aria-label="黑白">${icon("defaultColors")}</button>
              <button aria-label="無顏色">${icon("noneColor")}</button>
              <button aria-label="交換顏色">${icon("swapGray")}</button>
            </div>
            <div class="picker">
              <div class="picker-left">
                <div class="fields">
                  <div class="field"><div class="knob"></div></div>
                  <div class="ramp">
                    <svg width="24" height="12" viewBox="0 0 24 12" fill="#323232" stroke="#161616" stroke-width="1.500"><path d="M1 1.500v9L5.500 6zM23 1.500v9L18.500 6z"/></svg>
                  </div>
                </div>
                <div class="hex"><label for="hex">#</label><input id="hex" .value=${"00A371"} /></div>
              </div>
              <div class="channels">
                ${CHANNELS.map((c, i) => html`
                  <label class="ch">
                    <input type="radio" name="channel" .checked=${this.channel === i} @change=${() => (this.channel = i)} />
                    <span class="k">${c.key}</span><span class="v blue">${c.value}</span>${c.unit}
                  </label>`)}
                <div class="ch"><span class="pad"></span><span class="k">A:</span><span class="v blue">100</span>%</div>
              </div>
            </div>
            <div class="preview"></div>
            <button class="btn">增加至色票</button>
          </div>
        </section>
        <section class="panel">
          ${tabs(["對齊", "變形", "資訊"])}
          <div class="align">
            <div class="agrid">
              ${rows.map(([a, x, b, y]) => html`<div class="lbl">${a}</div><div class="lbl">${b}</div>${set(x)}${set(y)}`)}
            </div>
            <div class="hr"></div>
            <label class="check"><input type="checkbox" />與舞台對齊</label>
          </div>
        </section>
        <section class="panel scenes">
          ${tabs(["場景"])}
          <div class="list">
            <div class="scene">${icon("clapper")}場景1</div>
            <div class="foot">
              <button aria-label="新增場景">${icon("plusBox", 17)}</button>
              <button aria-label="重製場景">${icon("duplicate", 17)}</button>
              <button aria-label="刪除場景">${icon("trashLine", 17)}</button>
            </div>
          </div>
        </section>
        <section class="panel presets">${tabs(["移動預設效果"])}</section>
      </aside>`;
  }

  private timeline() {
    const btn = (n: string, label: string) => html`<button aria-label=${label}>${icon(n)}</button>`;
    return html`
      <section class="panel">
        ${tabs(["時間軸"])}
        <div class="tl">
          <div class="tl-left">
            <div class="tl-bar">
              ${btn("plusBox", "新增圖層")}${btn("folder", "新增資料夾")}${btn("trash", "刪除")}
              <span class="gap"></span>
              ${btn("camera", "攝影機")}${btn("hierarchy", "父子檢視")}${btn("graph", "圖層深度")}
            </div>
            <div class="tl-head">
              ${btn("layers", "圖層")}${btn("dot", "反白標示")}${btn("outline", "輪廓")}${btn("eyeOff", "隱藏")}${btn("lock", "鎖定")}
            </div>
            <div class="layer">${icon("layerPage")}<span class="name">圖層 _1</span><span class="mark"></span></div>
            <div class="tl-end"></div>
          </div>
          <div class="tl-right">
            <div class="tl-bar">
              <span class="fps">30.00</span><span class="sup">FPS</span>
              <span class="one small blue">1</span><span class="sup w">F</span>
              <div class="groups">
                ${btn("prev", "上一個")}${btn("onionA", "自動關鍵影格")}${btn("next", "下一個")}
                <span class="bar"></span>
                ${btn("onion", "描圖紙")}${btn("multiFrame", "編輯多個影格")}${btn("pasteDim", "補間")}${btn("splitFrame", "插入影格")}
                <span class="bar"></span>
                ${btn("loop", "循環")}${btn("stepBack", "後退")}${btn("play", "播放")}${btn("stepFwd", "前進")}
              </div>
            </div>
            <div class="secs">${[0, 5, 10, 15, 20, 25, 30, 35, 40].map((n) => html`<span>${n === 30 ? "1s" : ""}</span>`)}</div>
            <div class="nums">${[...FRAMES, 44].map((n) => html`<span>${n % 5 === 0 ? n : ""}</span>`)}</div>
            <div class="frames">${FRAMES.map((n) => html`<span class=${classMap({ first: n === 1, fifth: n % 5 === 0 })}></span>`)}</div>
            <div class="playhead"><svg width="11" height="32" viewBox="0 0 11 32"><path d="M0 0h11v29l-5.500 3L0 29z" fill="#3a7bc4"/></svg></div>
            <div class="scroll"><div><i></i></div></div>
          </div>
        </div>
      </section>`;
  }

  private center() {
    return html`
      <main class="col">
        ${this.timeline()}
        <section class="panel">
          ${tabs(["工具"])}
          <div class="tools">
            ${tool("arrow", "選取", true, true)}${tool("transform", "任意變形", true)}${tool("lasso", "套索", true)}
            <span class="bar"></span>
            ${tool("fluidBrush", "流暢筆刷")}${tool("brush", "筆刷")}${tool("eraser", "橡皮擦")}${tool("rect", "矩形", true)}${tool("line", "線段")}
            <span class="bar"></span>
            ${tool("pen", "鋼筆", true)}${tool("text", "文字")}${tool("bucket", "油漆桶", true)}${tool("dropper", "滴管")}${tool("pin", "資源彎曲")}
            <span class="bar"></span>
            ${tool("hand", "手形", true)}${tool("zoom", "縮放")}${tool("more", "更多")}
            <div class="swatches">
              <div class="swap">
                <button aria-label="交換顏色">${icon("swapArc")}</button>
                <button aria-label="黑白">${icon("defaultColors")}</button>
              </div>
              <button aria-label="填色與筆觸">
                <svg width="34" height="34" viewBox="0 0 34 34">
                  <path d="M11.500 12.500h21v21h-21z" fill="#fff" stroke="#111"/>
                  <path d="m12 33 5-5M28 17l4.500-4.500" stroke="#f00" stroke-width="2.200"/>
                  <path d="M16.500 17.500h11v11h-11z" fill="#383838" stroke="#111"/>
                  <path d="M1.500 1.500h20v20h-20z" fill="#fff" stroke="#111"/>
                  <path d="M3 3h17v17H3z" fill="#00a371"/>
                </svg>
              </button>
            </div>
          </div>
        </section>
        <section class="panel doc">
          <div class="doc-tabs">
            <div class="doc-tab">未命名-1
              <button aria-label="關閉"><svg width="7" height="7" viewBox="0 0 7 7"><path d="m.5.5 6 6m0-6-6 6" stroke="#b0b0b0"/></svg></button>
            </div>
          </div>
          <div class="edit">
            <button aria-label="編輯元件">${icon("club")}</button>
            <div class="select"><select aria-label="場景"><option>場景1</option></select>${icon("chevron")}</div>
            <div class="view">
              <button aria-label="置中舞台">${icon("center")}</button>
              <button aria-label="旋轉">${icon("handRotate")}</button>
              <button aria-label="裁切">${icon("clip")}</button>
              <div class="step"><button aria-label="放大">${icon("chevronUp")}</button><button aria-label="縮小">${icon("chevron")}</button></div>
              <input class="zoomv" aria-label="縮放比例" .value=${"58%"} />
              <button class="drop" aria-label="縮放清單">${icon("chevron")}</button>
            </div>
          </div>
          <div class="stage-area"><div class="stage"></div></div>
        </section>
      </main>`;
  }

  private right() {
    return html`
      <aside class="col right">
        <section class="panel">
          <div class="collapse end"><svg width="8" height="11" viewBox="0 0 8 11" fill="none" stroke="#d0d0d0" stroke-width="1.300"><path d="M.8 3.500 3.300 6 .8 8.500M4.500 3.500 7 6 4.500 8.500"/></svg></div>
          ${tabs(["屬性"])}
          <nav class="modes"><button>工具</button><button>物件</button><button>影格</button><button class="on">文件</button></nav>
          <div class="about"><span class="an">An</span><div><p>未命名-1</p><p>文件</p></div></div>
          <div class="snaps">
            <button class="on" aria-label="貼齊物件">${icon("magnet")}</button>
            <button class="on" aria-label="貼齊對齊">${icon("snap")}</button>
            <button aria-label="尺標">${icon("rulers")}</button>
            <button aria-label="鎖定">${icon("lock")}</button>
          </div>
          <div class="props">
            <div class="props-view"><div class="props-in">
              <div class="sec">
                <h3>${icon("chevron")}發佈設定</h3>
                <div class="prof"><label for="prof">描述檔</label><div class="select"><select id="prof"><option>預設</option></select>${icon("chevron")}</div></div>
                <button class="btn">更多設定</button>
              </div>
              <div class="sec">
                <h3>${icon("chevron")}文件設定</h3>
                <div class="dim">
                  <div>
                    <div class="size">
                      <div>
                        <div class="pair"><span>W</span><span class="blue">1280</span></div>
                        <div class="pair b"><span>H</span><span class="blue">720</span></div>
                      </div>
                      <svg class="link" width="18" height="50" viewBox="0 0 18 50">
                        <path d="M0 10.500h10.500V15M0 37.500h10.500V32" fill="none" stroke="#a8a8a8"/>
                        <svg x="1" y="13" width="20" height="20" viewBox="0 0 20 20">${GLYPHS.unlock}</svg>
                      </svg>
                    </div>
                    <div class="kv"><span>舞台</span><button class="chip" aria-label="舞台顏色"></button></div>
                    <div class="kv small"><span>FPS</span><span class="num blue">30</span></div>
                  </div>
                  <div class="opts">
                    <button class="btn">符合內容</button>
                    <label class="check"><input type="checkbox" />縮放內容</label>
                    <label class="check"><input type="checkbox" />套用至貼上板</label>
                    <label class="check"><input type="checkbox" />縮放範圍</label>
                  </div>
                </div>
                <button class="btn">更多設定</button>
              </div>
            </div></div>
            <div class="track"><i></i></div>
          </div>
        </section>
        <section class="panel lib">
          ${tabs(["元件庫", "CC Libraries", "資源"])}
          <div class="lib-top">
            <div class="select"><select aria-label="文件"><option>未命名-1</option></select>${icon("chevron")}</div>
            <button aria-label="釘選">${icon("libPin")}</button>
            <button aria-label="新增元件庫面板">${icon("newLib")}</button>
          </div>
          <div class="lib-prev"></div>
          <div class="lib-split"></div>
          <div class="lib-find">
            <label for="find">空元件庫</label>
            <div class="search"><input id="find" type="text" />${icon("zoom", 18)}</div>
          </div>
          <table><thead><tr>
            <th><span class="sort">名稱 ${icon("sortUp")}</span></th><th>連結</th><th>使用次數</th><th>修改日期</th>
          </tr></thead></table>
          <div class="lib-list">
            <div class="lib-foot">
              <button aria-label="新增元件">${icon("plusBox", 17)}</button>
              <button aria-label="新增資料夾">${icon("folder", 18)}</button>
              <button aria-label="內容">${icon("info", 18)}</button>
              <button aria-label="刪除">${icon("trashLine", 18)}</button>
              <i></i><i></i>
            </div>
          </div>
        </section>
      </aside>`;
  }

  render() {
    return html`
      <header class="topbar">
        <button class="home" aria-label="首頁">${icon("home")}</button>
        <button class="app-tab">Animate</button>
        <span class="vr"></span>
        <nav class="menus">${MENUS.map((m) => html`<button>${m}</button>`)}</nav>
        <span class="vr"></span>
        <div class="top-right">
          <button aria-label="分享">${icon("share")}</button>
          <button aria-label="工作區">${icon("workspace")}</button>
          <span class="vr"></span>
          <button aria-label="測試影片">${icon("playCircle")}</button>
          <div class="win">
            <button aria-label="最小化">${icon("minimize")}</button>
            <button aria-label="最大化">${icon("maximize")}</button>
            <button aria-label="關閉">${icon("close")}</button>
          </div>
        </div>
      </header>
      <div class="work">${this.left()}${this.center()}${this.right()}</div>
    `;
  }
}
